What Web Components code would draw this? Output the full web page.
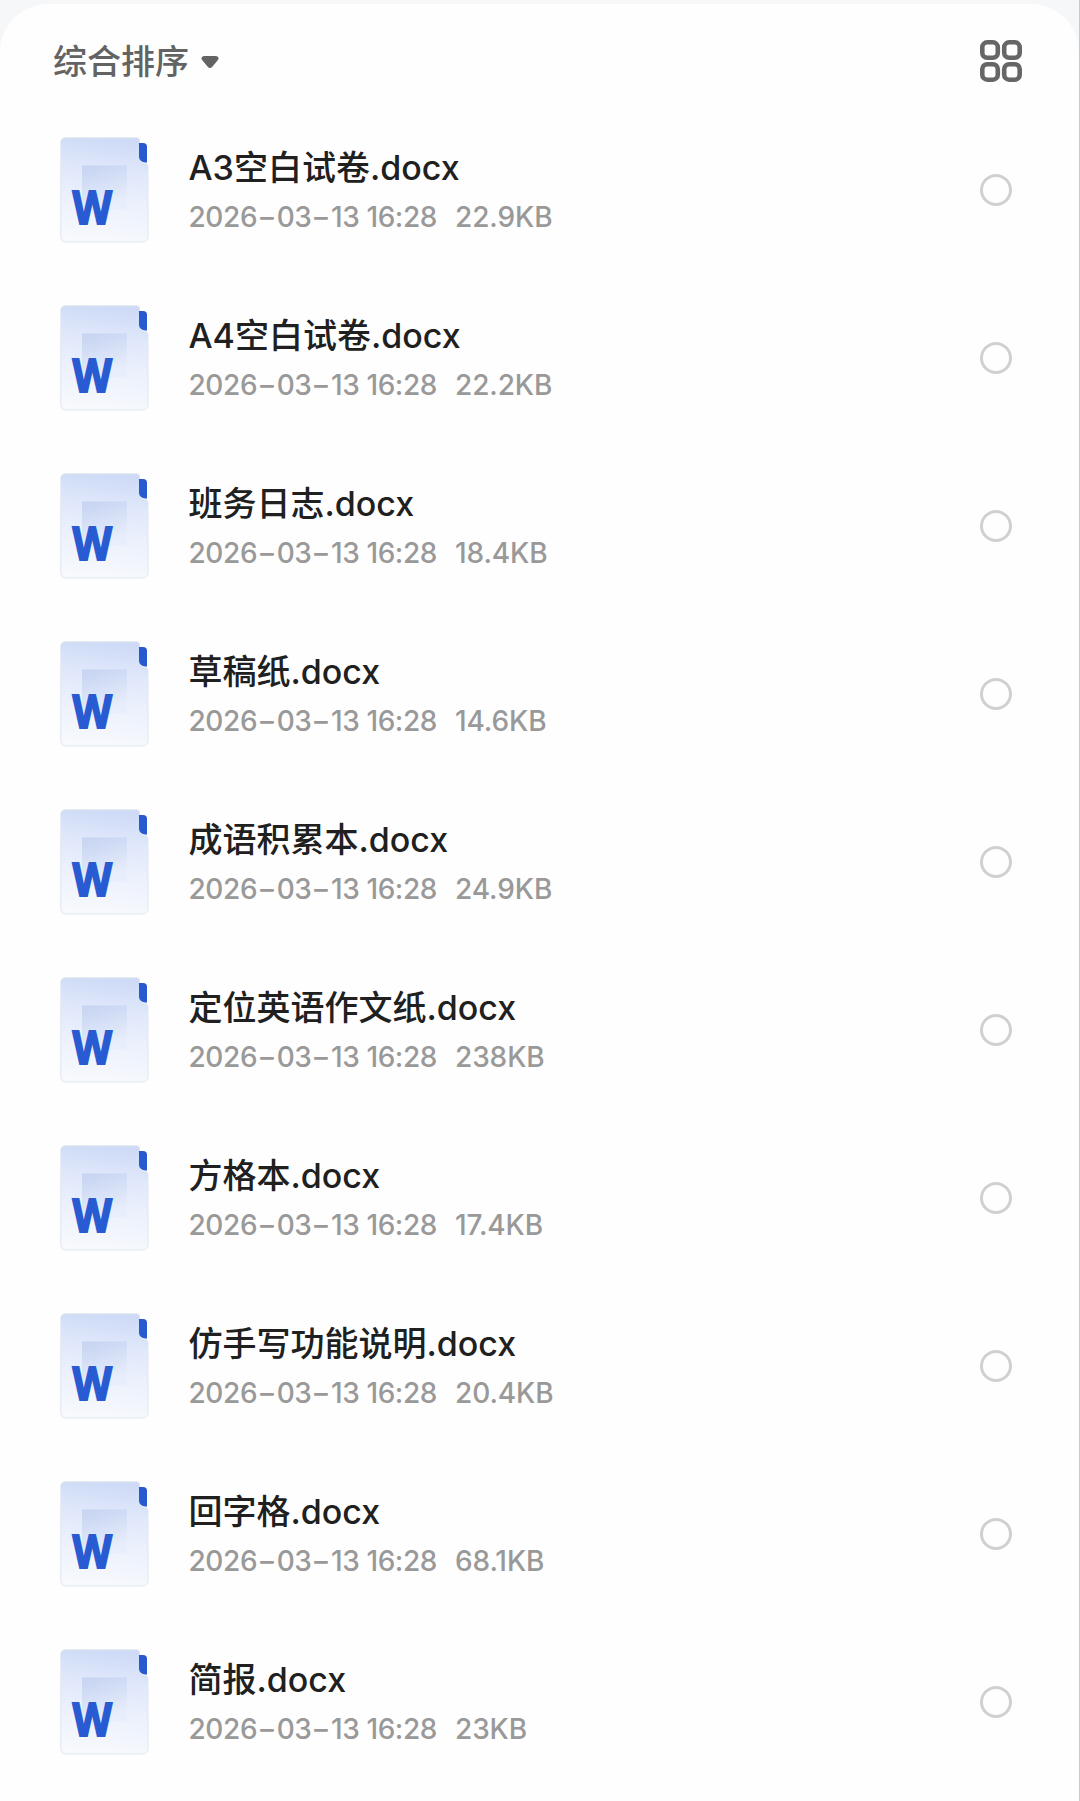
<!DOCTYPE html>
<html lang="zh-CN">
<head>
<meta charset="UTF-8">
<title>文件列表</title>
<style>
    html, body {
        margin: 0;
        padding: 0;
        background: #f5f7f8;
    }
</style>
</head>
<body>
<file-browser>
    <sort-button slot="sort">综合排序</sort-button>
    <grid-toggle slot="view"></grid-toggle>
</file-browser>

<script>
const FILES = [
    ['A3空白试卷.docx', '22.9KB'],
    ['A4空白试卷.docx', '22.2KB'],
    ['班务日志.docx', '18.4KB'],
    ['草稿纸.docx', '14.6KB'],
    ['成语积累本.docx', '24.9KB'],
    ['定位英语作文纸.docx', '238KB'],
    ['方格本.docx', '17.4KB'],
    ['仿手写功能说明.docx', '20.4KB'],
    ['回字格.docx', '68.1KB'],
    ['简报.docx', '23KB']
];

/**
 * Sort label with a small dropdown arrow
 */
class SortButton extends HTMLElement {
    constructor() {
        super();
        this.attachShadow({ mode: 'open' });
        this.shadowRoot.innerHTML = `
            <style>
                :host {
                    display: flex;
                    align-items: center;
                    gap: 12px;
                    padding-top: 1px;
                    font-size: 34px;
                    line-height: 48px;
                    color: #636363;
                }
                svg { display: block; }
            </style>
            <slot></slot>
            <svg width="18" height="14" viewBox="0 0 18 14">
                <path d="M3 1h12q4 1 1.500 4.500l-5 6q-2.500 3-5 0l-5-6Q-1 2 3 1z" fill="#636363"/>
            </svg>
        `;
    }
}

class GridToggle extends HTMLElement {
    constructor() {
        super();
        this.attachShadow({ mode: 'open' });
        this.shadowRoot.innerHTML = `
            <style>
                :host { display: block; }
                svg { display: block; }
            </style>
            <svg width="42" height="42" viewBox="0 0 42 42" fill="none" stroke="#666" stroke-width="4.600">
                <rect x="2.300" y="2.300" width="15.500" height="15.500" rx="5"/>
                <rect x="24.200" y="2.300" width="15.500" height="15.500" rx="5"/>
                <rect x="2.300" y="24.200" width="15.500" height="15.500" rx="5"/>
                <rect x="24.200" y="24.200" width="15.500" height="15.500" rx="5"/>
            </svg>
        `;
    }
}

/**
 * Word document icon
 */
class WordIcon extends HTMLElement {
    constructor() {
        super();
        this.attachShadow({ mode: 'open' });
        this.shadowRoot.innerHTML = `
            <style>
                :host { display: block; }
                svg { display: block; }
                text { font: 700 46px "Open Sans", sans-serif; }
            </style>
            <svg width="90" height="106" viewBox="0 0 90 106">
                <defs>
                    <linearGradient id="page" x1=".6" y1="0" x2=".5" y2="1">
                        <stop offset="0" stop-color="#ccdaf6"/>
                        <stop offset=".3" stop-color="#dfe7fa"/>
                        <stop offset=".6" stop-color="#ebf0fc"/>
                        <stop offset="1" stop-color="#f7f9fd"/>
                    </linearGradient>
                    <linearGradient id="block" x1="0" y1="0" x2=".3" y2="1">
                        <stop offset="0" stop-color="#c5d4f2"/>
                        <stop offset=".4" stop-color="#d2ddf5"/>
                        <stop offset="1" stop-color="#e8effc"/>
                    </linearGradient>
                </defs>
                <path d="M6 .8H77Q79.500 .8 79.500 4V21Q79.500 25 84 26Q88 27 88 30V99Q88 105 82 105H6Q.8 105 .8 99V6Q.8 .8 6 .8z" fill="url(#page)" stroke="#e0e5ef" stroke-width="1"/>
                <path d="M79 6h4q4 0 4 4v15.500h-2q-6-1-6-6z" fill="#2759cf"/>
                <path d="M22 28.500h45v44H22z" fill="url(#block)"/>
                <text x="12.500" y="87" textLength="39.500" lengthAdjust="spacingAndGlyphs" fill="#285bd2" stroke="#285bd2" stroke-width="1.800">W</text>
            </svg>
        `;
    }
}

/**
 * One file: icon, name, date and size, selection circle
 */
class FileRow extends HTMLElement {
    constructor() {
        super();
        this.attachShadow({ mode: 'open' });
    }

    connectedCallback() {
        this.render();
    }

    render() {
        const size = this.getAttribute('size') || '';

        this.shadowRoot.innerHTML = `
            <style>
                :host {
                    display: flex;
                    align-items: center;
                    box-sizing: border-box;
                    height: 168px;
                    padding: 0 67px 0 60px;
                }
                .info {
                    flex: 1;
                    margin-left: 38.500px;
                    padding-top: 4px;
                    white-space: nowrap;
                }
                .name {
                    height: 49px;
                    line-height: 49px;
                    font-size: 34px;
                    font-weight: 500;
                    color: #202020;
                }
                .meta {
                    display: flex;
                    height: 49px;
                    line-height: 51px;
                    font-size: 28px;
                    letter-spacing: -.1px;
                    color: #999;
                }
                .date {
                    width: 266.500px;
                    letter-spacing: -.4px;
                }
                .dash {
                    display: inline-block;
                    width: 19.500px;
                    text-align: center;
                    transform: scaleX(1.500);
                }
                .check {
                    box-sizing: border-box;
                    width: 32px;
                    height: 32px;
                    border: 3px solid #d0d0d0;
                    border-radius: 50%;
                }
            </style>
            <word-icon></word-icon>
            <div class="info">
                <div class="name"><slot></slot></div>
                <div class="meta">
                    <span class="date">2026<span class="dash">-</span>03<span class="dash">-</span>13 16:28</span>
                    <span class="size">${size}</span>
                </div>
            </div>
            <div class="check"></div>
        `;
    }
}

/**
 * Rounded sheet with toolbar and file list
 */
class FileBrowser extends HTMLElement {
    constructor() {
        super();
        this.attachShadow({ mode: 'open' });
    }

    connectedCallback() {
        this.shadowRoot.innerHTML = `
            <style>
                :host {
                    display: block;
                    box-sizing: border-box;
                    height: 1801px;
                    padding-top: 4px;
                    overflow: hidden;
                    border-right: 1px solid #c9cacb;
                    background: #f5f7f8;
                    font-family: Inter, "Noto Sans CJK SC", sans-serif;
                    font-weight: 500;
                }
                .sheet {
                    height: 1797px;
                    border-radius: 48px 48px 0 0;
                    background: #fefefe;
                }
                header {
                    display: flex;
                    justify-content: space-between;
                    align-items: center;
                    box-sizing: border-box;
                    height: 102px;
                    padding: 12px 57px 0 53px;
                }
            </style>
            <div class="sheet">
                <header>
                    <slot name="sort"></slot>
                    <slot name="view"></slot>
                </header>
                <main>
                    ${FILES.map(([name, size]) => `<file-row size="${size}">${name}</file-row>`).join('')}
                </main>
            </div>
        `;
    }
}

customElements.define('sort-button', SortButton);
customElements.define('grid-toggle', GridToggle);
customElements.define('word-icon', WordIcon);
customElements.define('file-row', FileRow);
customElements.define('file-browser', FileBrowser);
</script>
</body>
</html>
